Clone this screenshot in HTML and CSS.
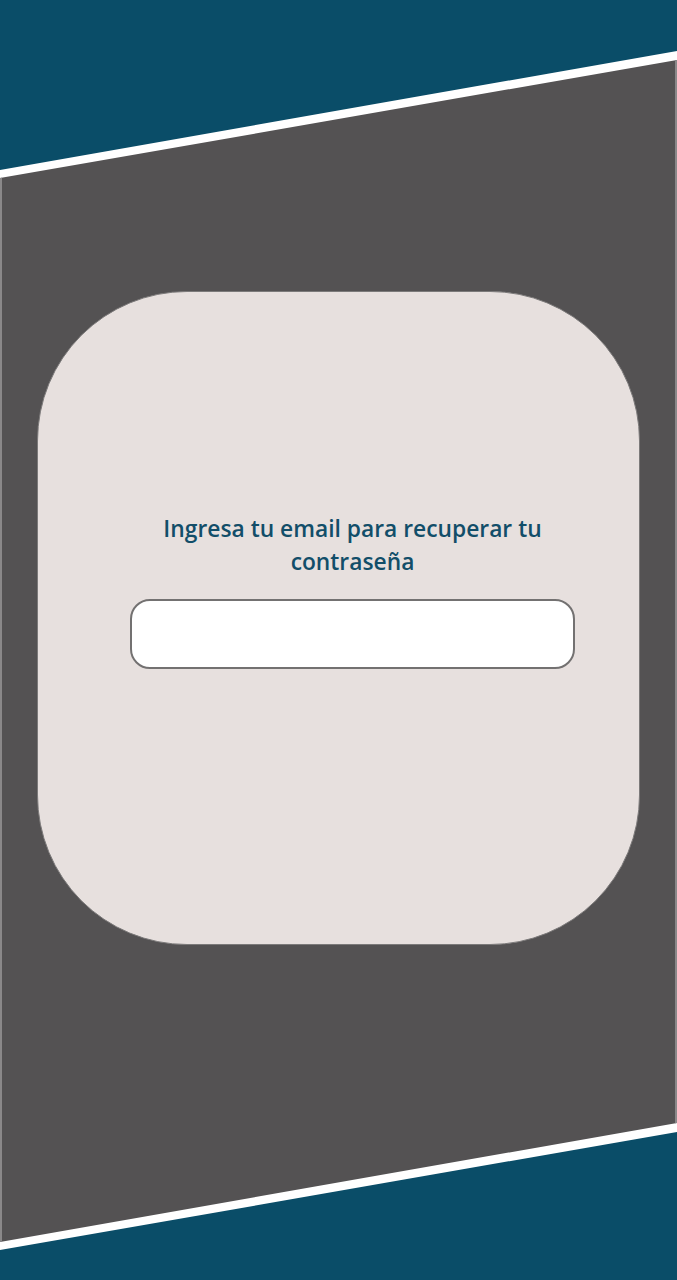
FILE: index.html
```html
<!DOCTYPE html>
<html lang="es">
<head>
<meta charset="utf-8">
<title>Recuperar contraseña</title>
<link rel="stylesheet" href="styles.css">
</head>
<body>
<div class="screen">
  <div class="stripe">
    <div class="panel">
      <div class="card">
        <h1 class="title">Ingresa tu email para recuperar tu contraseña</h1>
        <input class="email" type="email" aria-label="Email">
      </div>
    </div>
  </div>
</div>
</body>
</html>
```
FILE: styles.css
```css
html, body {
  margin: 0;
  padding: 0;
}
body {
  background: #0a4d68;
  font-family: "Open Sans", "Noto Sans", sans-serif;
}
.screen {
  width: 677px;
  height: 1280px;
  background: #0a4d68;
  overflow: hidden;
}
.stripe {
  height: 100%;
  background: #ffffff;
  clip-path: polygon(0 170px, 677px 51px, 677px 1132px, 0 1250px);
}
.panel {
  height: 100%;
  box-sizing: border-box;
  background: #545253;
  border-right: 2px solid #8a8889;
  border-left: 2px solid #8a8889;
  clip-path: polygon(0 178px, 677px 60px, 677px 1123px, 0 1242px);
  padding-top: 291px;
  display: flex;
  justify-content: center;
  align-items: flex-start;
}
.card {
  width: 603px;
  height: 654px;
  box-sizing: border-box;
  background: #e7e0de;
  border: 1px solid #7c7a7a;
  border-radius: 150px;
  padding: 220px 0 0 28px;
  display: flex;
  flex-direction: column;
  align-items: center;
}
.title {
  margin: 0;
  width: 440px;
  text-align: center;
  font-size: 22.8px;
  line-height: 33px;
  font-weight: 600;
  color: #124e69;
}
.email {
  margin-top: 21px;
  width: 445px;
  height: 70px;
  box-sizing: border-box;
  background: #ffffff;
  border: 2px solid #737171;
  border-radius: 20px;
  outline: none;
  font-family: inherit;
  font-size: 18px;
  padding: 0 16px;
}
```
